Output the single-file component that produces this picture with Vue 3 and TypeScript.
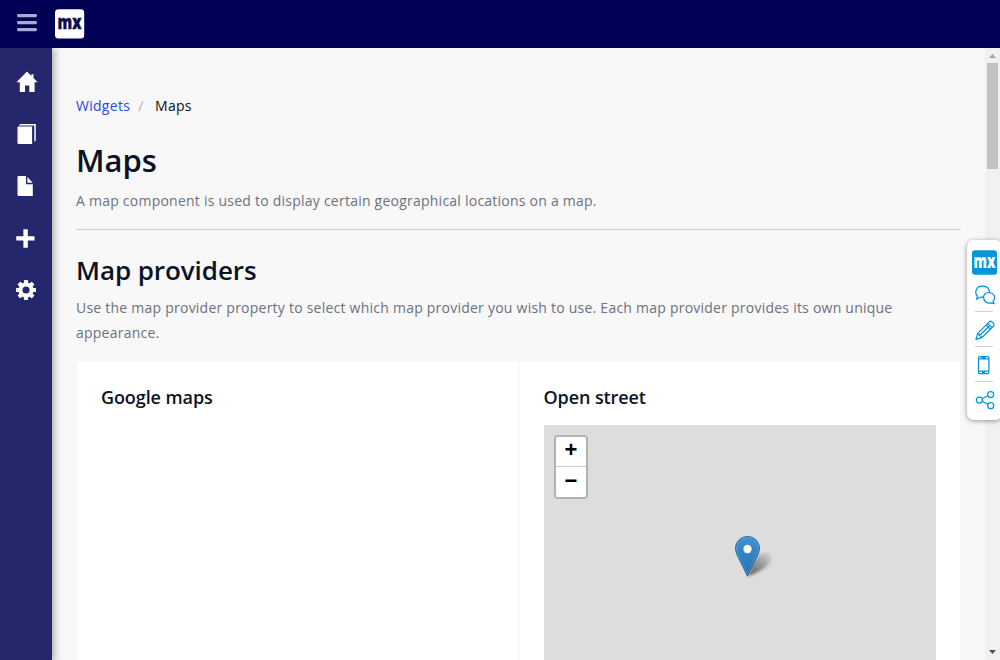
<script setup lang="ts">
const navItems: string[] = ['home', 'pages', 'file', 'plus', 'settings']
const teeth: number[] = [0, 45, 90, 135, 180, 225, 270, 315]
</script>

<template>
  <div class="app">
    <header class="topbar">
      <svg class="burger" width="20" height="18" viewBox="0 0 20 18">
        <rect y="0" width="20" height="3.2" rx="1.4" />
        <rect y="7" width="20" height="3.2" rx="1.4" />
        <rect y="14" width="20" height="3.2" rx="1.4" />
      </svg>
      <svg class="brand" width="30" height="30" viewBox="0 0 30 30">
        <rect x="0" y="0.3" width="29.2" height="29.2" rx="3.5" fill="#fff" />
        <text x="2.6" y="20.2" textLength="24" lengthAdjust="spacingAndGlyphs" class="mx dark">mx</text>
      </svg>
    </header>

    <div class="body">
      <nav class="sidebar">
        <a v-for="item in navItems" :key="item" class="nav-item" :class="item">
          <svg width="22" height="22" viewBox="0 0 22 22" fill="#fff">
            <path v-if="item === 'home'" d="M11 .6 15.5 5V3.2h2V7l4.2 4.3H18.6V21H13.3V14.6H9V21H3.8V11.3H.4Z" />
            <template v-else-if="item === 'pages'">
              <path d="M1.5 4 2.2 3.4H16.1V21H2.3L1.5 20.2Z" />
              <path d="M2.8 2.5 4.2 1H19.8V17.6L18.3 18.8V2.5Z" />
            </template>
            <template v-else-if="item === 'file'">
              <path d="M1.5 1.8 2.2 1H10V9.2h6.8V21H2.2l-.7-.8Z" />
              <path d="M11.4 2 16.8 7.7H11.4Z" />
            </template>
            <path v-else-if="item === 'plus'" d="M7.4 2.3h4.4v7h6.7v4.2H11.8v7.3H7.4V13.5H.2V9.3h7.2Z" />
            <g v-else>
              <rect v-for="angle in teeth" :key="angle" x="7.9" y="1" width="4.2" height="5" rx=".7" :transform="`rotate(${angle} 10 11)`" />
              <circle cx="10" cy="11" r="5.6" fill="none" stroke="#fff" stroke-width="4" />
            </g>
          </svg>
        </a>
      </nav>

      <main class="content">
        <div class="breadcrumb"><a>Widgets</a><span class="sep">/</span><span>Maps</span></div>
        <h1>Maps</h1>
        <p class="lead">A map component is used to display certain geographical locations on a map.</p>
        <h2>Map providers</h2>
        <p>Use the map provider property to select which map provider you wish to use. Each map provider provides its own unique appearance.</p>
        <div class="cards">
          <section class="card"><h3>Google maps</h3></section>
          <section class="card">
            <h3>Open street</h3>
            <div class="map">
              <div class="zoom">
                <button type="button">+</button>
                <button type="button">−</button>
              </div>
              <svg class="marker" width="46" height="46" viewBox="0 0 46 46">
                <defs>
                  <linearGradient id="pin" x1="0" y1="0" x2="0" y2="1">
                    <stop offset="0" stop-color="#3f92cf" />
                    <stop offset="1" stop-color="#2471b5" />
                  </linearGradient>
                  <linearGradient id="shade" x1="0" y1="1" x2="1" y2="0">
                    <stop offset="0" stop-color="#000" stop-opacity=".6" />
                    <stop offset="1" stop-color="#000" stop-opacity=".04" />
                  </linearGradient>
                  <filter id="soft" x="-30%" y="-30%" width="160%" height="160%"><feGaussianBlur stdDeviation="1.8" /></filter>
                </defs>
                <path d="M13 40C17 31 20 18 30 17c8 0 8 8 1 14-5 4-11 7-18 9Z" fill="url(#shade)" filter="url(#soft)" />
                <path d="M12.5.5C5.8.5.5 5.9.5 12.4c0 3 1.3 6 2.7 8.8L12.5 40.2l9.3-19c1.4-2.8 2.7-5.8 2.7-8.8C24.5 5.9 19.2.5 12.5.5Z" fill="url(#pin)" stroke="#2e6c97" />
                <path d="M12.5 1.6C6.4 1.6 1.6 6.5 1.6 12.4c0 2.8 1.2 5.6 2.6 8.3l8.3 17 8.3-17c1.4-2.7 2.6-5.5 2.6-8.3 0-5.9-4.8-10.8-10.9-10.8Z" fill="none" stroke="#fff" stroke-opacity=".15" />
                <circle cx="12.5" cy="13" r="4.5" fill="#fff" stroke="#2e6c97" stroke-opacity=".6" />
              </svg>
            </div>
          </section>
        </div>
      </main>

      <div class="scrollbar">
        <svg width="15" height="15" viewBox="0 0 15 15"><path d="M4 10 7.5 6 11 10Z" fill="#a3a3a3" /></svg>
        <div class="thumb"></div>
        <svg class="down" width="15" height="15" viewBox="0 0 15 15"><path d="M4 5 7.5 9 11 5Z" fill="#505050" /></svg>
      </div>
    </div>

    <aside class="tools">
      <svg width="33" height="180" viewBox="0 0 33 180" fill="none" stroke="#0595db" stroke-width="1.25" stroke-linejoin="round">
        <rect x="5" y="10.3" width="25" height="24.5" rx="3" fill="#0595db" stroke="none" />
        <text x="6.5" y="27.9" textLength="22" lengthAdjust="spacingAndGlyphs" class="mx light">mx</text>
        <path d="M9.4 59.2 10.6 56.2C7 52.8 9 46.2 15.3 46.2c6.6 0 8.4 5.2 6 8.4-1.7 2.3-5 2.8-7.6 2.4Z" />
        <path d="M16.6 57.6C16.2 54.6 18.6 52.6 21.6 52.5c4 0 6.2 2.6 6 5.4-.1 1.7-.8 2.7-1.6 3.4l1.2 2.4-3.3-.8c-4 .9-7-1.6-7.3-5.3Z" fill="#fff" />
        <path d="M9 99.3 10.8 93.4 22.5 81.6q1.4-.8 2.5.3l1.6 1.7q1 1.2 0 2.4L14.8 97.7Zm1.8-5.9 4 4.3M20.7 83.4l4.3 4.4M19.2 85l4.3 4.4M12.6 95.5 22.3 86" />
        <rect x="11.5" y="116.6" width="10.4" height="16.9" rx="1.3" />
        <path d="M11.5 118.8h10.4M11.5 131h10.4M14.5 117.6h4M15 132.3h3" />
        <circle cx="12.4" cy="160" r="3" /><circle cx="23.7" cy="154.5" r="3" /><circle cx="23.7" cy="165.7" r="3" />
        <path d="M15.1 158.7 21 155.8M15.1 161.3 21 164.4" />
        <path d="M8 71.5h18M8 106.5h18M8 141.5h18" stroke="#d2d2d2" stroke-width="1" />
      </svg>
    </aside>
  </div>
</template>

<style>
html, body { margin: 0; overflow: hidden; }
</style>

<style scoped>
* { box-sizing: border-box; }
.app { position: relative; width: 1000px; height: 660px; display: flex; flex-direction: column; overflow: hidden; background: #f8f8f8; color: #0a1325; font: 14px/25px "Open Sans", sans-serif; }
.topbar { height: 48px; flex: none; display: flex; align-items: flex-start; gap: 18px; padding: 9px 17px; background: #000055; }
.burger { margin-top: 5px; fill: #aaaacc; }
.brand, .tools svg { overflow: visible; }
.mx { font-family: "Open Sans", sans-serif; font-weight: 800; }
.dark { font-size: 20px; fill: #0a0e50; stroke: #0a0e50; stroke-width: .4; }
.light { font-size: 18.5px; fill: #fff; stroke: none; }
.body { flex: 1; min-height: 0; display: flex; }
.sidebar { position: relative; z-index: 1; width: 52px; flex: none; display: flex; flex-direction: column; gap: 30px; padding: 23px 16px; background: #24276c; box-shadow: 2px 0 8px rgba(0, 0, 0, .35); clip-path: inset(0 -20px 0 0); }
.nav-item { height: 22px; line-height: 0; }
.content { flex: 1; padding: 45px 24px 0; overflow: hidden; }
.breadcrumb { display: flex; height: 25px; letter-spacing: .28px; }
.breadcrumb a { color: #264ae5; }
.sep { margin: 0 11.5px 0 8px; color: #a9acb3; }
h1, h2, h3, p { margin: 0; }
h1, h2, h3 { font-weight: 600; }
h1 { margin-top: 22px; font-size: 31px; line-height: 40px; }
h2 { margin-top: 23px; font-size: 26px; line-height: 34px; letter-spacing: -.07px; }
h3 { font-size: 18px; line-height: 24px; letter-spacing: -.09px; }
p { margin-top: 8px; color: #6c717e; letter-spacing: .235px; }
.lead { padding-bottom: 16px; border-bottom: 1px solid #ced0d3; }
.cards { display: grid; grid-template-columns: 1fr 1fr; gap: 2px; margin: 17px 1px 0; }
.card { height: 340px; padding: 23px 24px; background: #fff; }
.map { position: relative; height: 270px; margin-top: 16px; background: #ddd; }
.zoom { position: absolute; left: 10px; top: 10px; width: 34px; border: 2px solid #b2b2b2; border-radius: 4px; overflow: hidden; background: #fff; }
.zoom button { display: block; width: 30px; height: 30px; padding: 0 0 3px 1px; border: 0; background: #fff; color: #000; font: bold 22px/26px "Liberation Sans", sans-serif; }
.zoom button:first-child { border-bottom: 1px solid #ccc; }
.marker { position: absolute; left: 191px; top: 111px; }
.scrollbar { width: 15px; flex: none; display: flex; flex-direction: column; align-items: center; background: #f1f1f1; }
.thumb { width: 11px; height: 106px; background: #c1c1c1; }
.down { margin-top: auto; }
.tools { position: absolute; z-index: 2; left: 967px; top: 240px; width: 35px; height: 180px; border-radius: 7px; background: #fff; box-shadow: 0 1px 5px rgba(0, 0, 0, .4); }
</style>
